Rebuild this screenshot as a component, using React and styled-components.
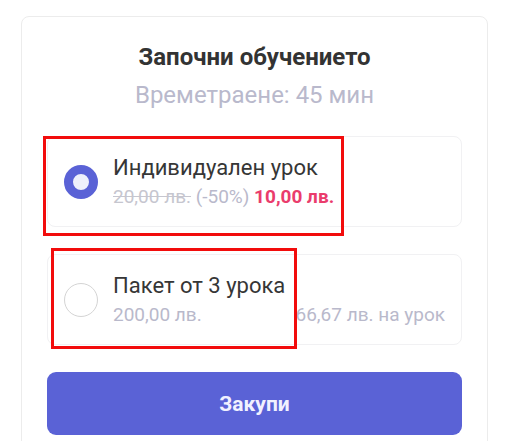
import React, { useState } from 'react';
import styled, { createGlobalStyle } from 'styled-components';

const GlobalStyle = createGlobalStyle`
    body {
        margin: 0;
        background: #fff;
        font-family: Roboto, "Noto Sans", sans-serif;
        overflow: hidden;
    }
`;

const Card = styled.div`
    width: 467px;
    box-sizing: border-box;
    margin: 16px 0 0 21px;
    padding: 26px 25px 40px;
    background: #fff;
    border: 1px solid #ececec;
    border-radius: 8px;
`;

const Title = styled.h2`
    margin: 0;
    text-align: center;
    font-size: 24px;
    line-height: 28px;
    font-weight: 700;
    color: #333;
`;

const Subtitle = styled.p`
    margin: 10px 0 27px;
    text-align: center;
    font-size: 24px;
    line-height: 28px;
    color: #b9b9cc;
`;

const Options = styled.div`
    display: flex;
    flex-direction: column;
    gap: 27px;
`;

const Option = styled.label`
    position: relative;
    display: flex;
    align-items: center;
    gap: 15px;
    height: 91px;
    padding: 0 16px;
    box-sizing: border-box;
    border: 1px solid #f1f1f3;
    border-radius: 8px;
    cursor: pointer;
`;

const Radio = styled.span`
    flex: none;
    width: 34px;
    height: 34px;
    box-sizing: border-box;
    border-radius: 50%;
    border: ${p => (p.$checked ? '9px solid #5a62d6' : '1.5px solid #d4d4d4')};
    background: ${p => (p.$checked ? '#eef0fb' : '#fff')};
`;

const Body = styled.div`
    flex: 1;
    display: flex;
    flex-direction: column;
    gap: 5px;
`;

const Name = styled.div`
    font-size: 22px;
    line-height: 26px;
    color: #363636;
`;

const PriceRow = styled.div`
    display: flex;
    justify-content: space-between;
    font-size: 19px;
    line-height: 22px;
    color: #b9b9cb;
`;

const Old = styled.span`
    text-decoration: line-through;
    color: #c6c6cf;
`;

const Sale = styled.span`
    font-weight: 700;
    color: #ea3c6c;
`;

const Marker = styled.span`
    position: absolute;
    left: ${p => p.$left}px;
    top: ${p => p.$top}px;
    width: ${p => p.$w}px;
    height: ${p => p.$h}px;
    box-sizing: border-box;
    border: 3px solid #f20c0c;
    pointer-events: none;
`;

const BuyButton = styled.button`
    display: block;
    width: 100%;
    height: 63px;
    margin-top: 27px;
    border: none;
    border-radius: 9px;
    background: #5a62d6;
    color: #f1f1ff;
    font-family: Roboto, "Noto Sans", sans-serif;
    font-size: 21px;
    font-weight: 700;
`;

function App() {
    const [selected, setSelected] = useState(0);

    return (
        <>
            <GlobalStyle />
            <Card>
                <Title>Започни обучението</Title>
                <Subtitle>Времетраене: 45 мин</Subtitle>
                <Options>
                    <Option onClick={() => setSelected(0)}>
                        <Radio $checked={selected === 0} />
                        <Body>
                            <Name>Индивидуален урок</Name>
                            <PriceRow>
                                <span>
                                    <Old>20,00 лв.</Old> (-50%) <Sale>10,00 лв.</Sale>
                                </span>
                            </PriceRow>
                        </Body>
                        <Marker $left={-5} $top={-1} $w={301} $h={100} />
                    </Option>
                    <Option onClick={() => setSelected(1)}>
                        <Radio $checked={selected === 1} />
                        <Body>
                            <Name>Пакет от 3 урока</Name>
                            <PriceRow>
                                <span>200,00 лв.</span>
                                <span>66,67 лв. на урок</span>
                            </PriceRow>
                        </Body>
                        <Marker $left={3} $top={-7} $w={246} $h={101} />
                    </Option>
                </Options>
                <BuyButton>Закупи</BuyButton>
            </Card>
        </>
    );
}

export default App;
